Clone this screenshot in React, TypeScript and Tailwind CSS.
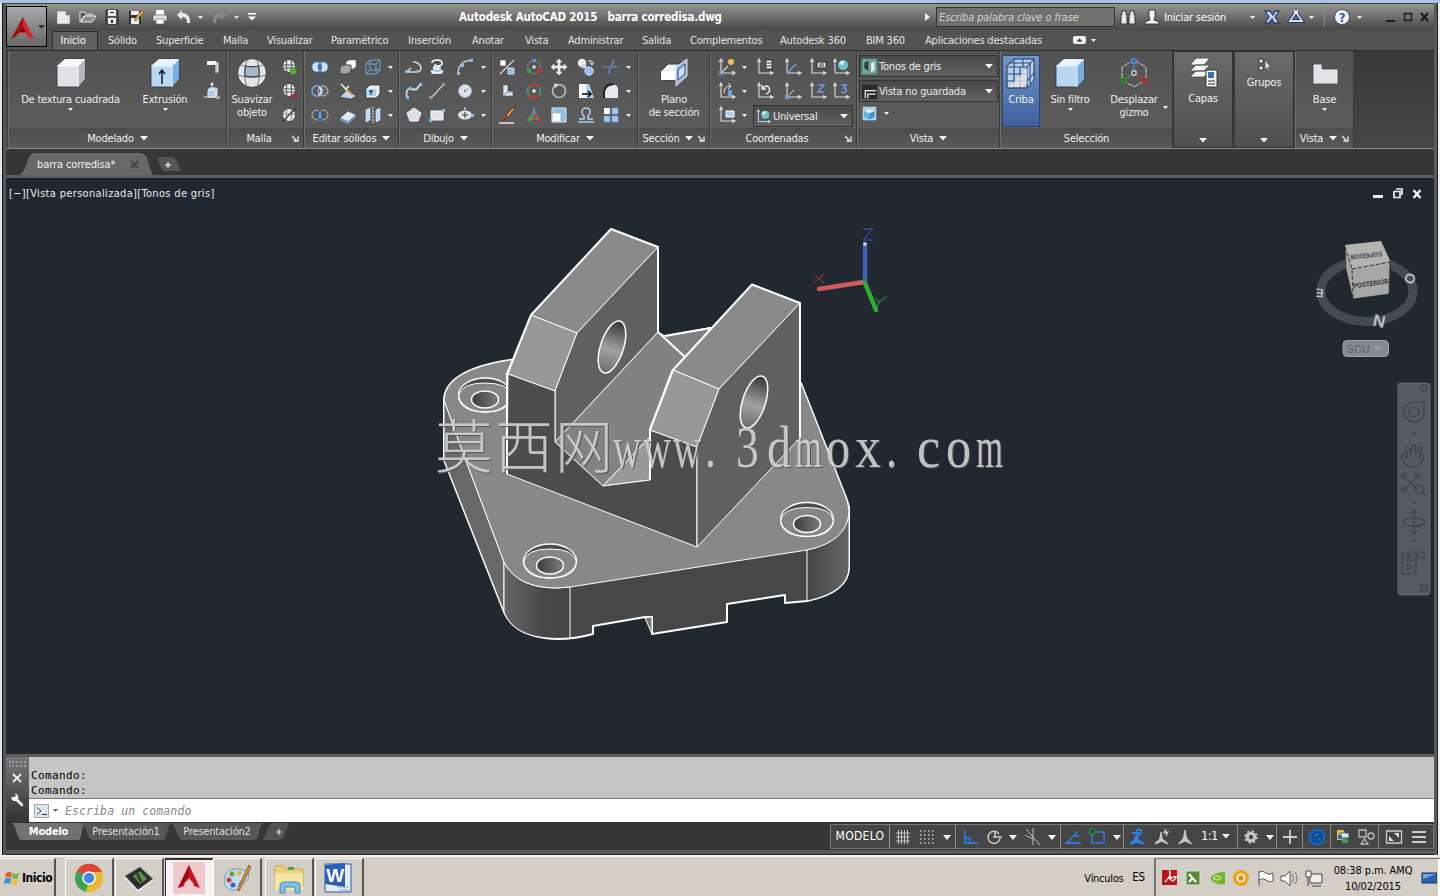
import type { ReactNode } from "react";

const W = "#e8ebf0";
const B = "#8dbbe8";
const D = "#23272e";

// 20x20 ribbon glyphs, keyed by command name
const icons: Record<string, ReactNode> = {
  newFile: <path d="M3 4h9l4 4v9H3zM12 4v4h4" fill={W} stroke="#777" strokeWidth=".6" />,
  open: <><path d="M2 15V5h5l1 2h6v2H6z" fill="#555" stroke={W} /><path d="M3 15l4-6h11l-4 6z" fill="#8a8a8a" stroke={W} /></>,
  save: <><path d="M4 3h12v14H4z" fill="#555" stroke="#2a2a2a" /><path d="M6 3h8v6H6zM6 11h8v6H6z" fill={W} /><path d="M8 5h4v1H8zM9 13h2v3H9z" fill={D} /></>,
  saveAs: <><path d="M3 4h12v13H3z" fill="#333" /><path d="M5 4h8v4H5zM5 11h8v6H5z" fill={W} /><path d="M8 13l8-10 2 2-8 9z" fill="#e8b14a" stroke="#6b4a17" strokeWidth=".7" /></>,
  print: <><path d="M6 3h8v5H6z" fill="#fff" /><path d="M3 8h14v6H3z" fill="#dfe3e8" stroke="#444" strokeWidth=".6" /><path d="M6 12h8v5H6z" fill="#fff" stroke="#555" strokeWidth=".6" /></>,
  undo: <path d="M3 8l5-5v3c5 0 8 3 8 8v2h-3c0-4-1-6-5-6v3z" fill="#e8e8e8" />,
  redo: <path d="M17 8l-5-5v3c-5 0-8 3-8 8v2h3c0-4 1-6 5-6v3z" fill="#8a8a8a" />,
  poly: <><path d="M5 4h9l3 2v9l-4 2V8H5z" fill="#c9ccd2" stroke="#4a4a4a" strokeWidth=".6" /><path d="M5 4h9l-1 4H5z" fill="#f5f6f8" /></>,
  pull: <><path d="M6 9h7v7H6zM6 9l2-2h7v7l-2 2M10 7V2M2 16h16M13 16l4 2" fill="#a9cdf0" stroke={W} /><path d="M8 4l2-3 2 3z" fill={W} /></>,
  meshAdd: <><circle cx="10" cy="9" r="6.500" fill={W} stroke="#444" /><path d="M4 8h12M4 11h12M8 3q-1.500 6 0 12M12 3q1.500 6 0 12" stroke="#555" fill="none" /><circle cx="14" cy="14" r="3.500" fill="#56a83b" /></>,
  meshDel: <><circle cx="10" cy="9" r="6.500" fill={W} stroke="#444" /><path d="M4 8h12M4 11h12M8 3q-1.500 6 0 12M12 3q1.500 6 0 12" stroke="#555" fill="none" /><path d="M12 15h6" stroke="#a52727" strokeWidth="3" /></>,
  meshCrease: <><circle cx="10" cy="10" r="6.500" fill={W} stroke="#444" /><path d="M4 9h12M8 4q-1.500 6 0 12M12 4q1.500 6 0 12" stroke="#888" fill="none" /><path d="M3 17L17 3" stroke="#333" strokeWidth="1.300" /></>,
  union: <><circle cx="7" cy="10" r="5" fill="#cfe2f6" stroke="#5f91cc" /><circle cx="13" cy="10" r="5" fill="#cfe2f6" stroke="#5f91cc" /><ellipse cx="10" cy="10" rx="2" ry="4" fill="#3f75b5" /></>,
  subtract: <><circle cx="13" cy="10" r="5" fill="#666" stroke="#ccc" /><circle cx="7" cy="10" r="5" fill="none" stroke="#6ea0dc" strokeWidth="2" /><path d="M9 6q5 4 0 8" stroke="#fff" strokeWidth="1.500" fill="none" /></>,
  intersect: <><circle cx="7" cy="10" r="5" fill="none" stroke="#bbb" /><circle cx="13" cy="10" r="5" fill="none" stroke="#bbb" /><ellipse cx="10" cy="10" rx="2.500" ry="4.500" fill="#5a99e0" stroke="#234" /></>,
  solidCopy: <><path d="M8 5l3-2h7v7l-3 2H8z" fill="#fff" stroke="#666" strokeWidth=".6" /><path d="M2 10l3-2h8v6l-3 3H2z" fill="#9ea6a6" stroke="#444" /></>,
  slice: <><path d="M2 16l7-7 9 6-5 3z" fill="#bcd9f5" stroke="#335" strokeWidth=".6" /><path d="M8 8l6 6" stroke="#e3a63b" strokeWidth="2" /><path d="M3 3l6 6M7 9l4-4" stroke={W} strokeWidth="1.600" /></>,
  thicken: <><path d="M2 13l8-7 8 4-8 7z" fill={W} stroke="#446" strokeWidth=".6" /><path d="M2 13l8 4 8-7v2l-8 7-8-4z" fill="#6c9fda" /></>,
  edges: <path d="M3 7h10v10H3zM7 3h10v10H7zM3 7l4-4M13 7l4-4M13 17l4-4M3 17l4-4" fill="none" stroke="#6fa5de" />,
  extrudeFace: <><path d="M3 8l4-4h10v9l-4 4H3z" fill={W} stroke="#222" strokeWidth=".7" /><path d="M3 8h10v7H3z" fill="#a9d0ee" /><path d="M8 14V9M6 11l2-2 2 2" stroke="#111" fill="none" /></>,
  separate: <><path d="M3 5l4-2v12l-4 2zM13 5l4-2v12l-4 2z" fill="#b9dafa" stroke={W} strokeWidth=".6" /><path d="M10 2v16" stroke="#fff" strokeDasharray="2 1" /></>,
  polyline: <><path d="M3 15h9q5 0 5-4t-6-6M3 15l4-4" stroke="#d3d8df" strokeWidth="1.600" fill="none" /><path d="M1 13h3v3H1zM9 4h2v2H9zM12 13h2v2h-2z" fill={B} /></>,
  helix: <><path d="M4 17l3-8h6l3 8z" fill="#a2ccef" /><path d="M5 6q0-3 5-3t5 3-4 3q-4 0-3-2M6 10q5 4 7 0M4 14q6 4 12 0" stroke="#fff" strokeWidth="1.600" fill="none" /></>,
  arc: <><path d="M3 17Q3 4 17 3" stroke="#c6cbd3" strokeWidth="1.300" fill="none" /><path d="M2 15h3v3H2zM6 7h3v3H6zM15 2h3v3h-3z" fill={B} /></>,
  spline: <><path d="M3 17Q1 7 7 8t6 0 4-5" stroke="#d6dae0" strokeWidth="1.800" fill="none" /><path d="M2 15h3v3H2zM5 6h3v3H5zM15 2h3v3h-3z" fill={B} /></>,
  line: <><path d="M4 17L17 3" stroke="#cdd1d7" strokeWidth="1.200" /><path d="M2 15h3v3H2zM15 2h3v3h-3z" fill="#8c97b0" /></>,
  circle: <><circle cx="10" cy="10" r="6.500" fill="#dfe2e8" stroke="#aab" /><path d="M10 10l3-3" stroke="#7799cc" /><circle cx="10" cy="10" r="1.200" fill="#6f93cc" /></>,
  polygon: <path d="M10 3l7 5-3 8H6L3 8z" fill="#dde0e6" stroke="#f4f4f4" />,
  rect: <><path d="M4 6h12v9H4z" fill="#dfe2e7" stroke="#fff" /><path d="M15 4h3v3h-3zM2 14h3v3H2z" fill={B} /></>,
  ellipse: <><ellipse cx="10" cy="10" rx="7" ry="4.500" fill="#e0e3e8" /><path d="M10 7v6M7 10h6" stroke="#333" /><path d="M9 2h2v3H9zM16 9h3v3h-3z" fill={B} /></>,
  align: <><path d="M3 3h6v6H3z" fill="#fff" stroke="#444" strokeWidth=".6" /><path d="M11 11h6v6h-6z" fill="#8db9ee" stroke="#cde" /><path d="M3 17L17 3" stroke="#ccc" strokeWidth="1.300" /></>,
  gizmoMove: <><path d="M10 3l6 3.500v7L10 17l-6-3.500v-7z" fill="none" stroke="#999" strokeDasharray="3 1" /><path d="M8 2h4v3H8z" fill="#5c8fe0" /><path d="M3 12h4v4H3z" fill="#3fa03f" /><path d="M13 12h5v4h-5z" fill="#b53232" /><circle cx="10" cy="10" r="1.800" fill="#ddd" /></>,
  move: <path d="M10 2l3 3h-2v4h4V7l3 3-3 3v-2h-4v4h2l-3 3-3-3h2v-4H5v2l-3-3 3-3v2h4V5H7z" fill={W} stroke={W} strokeWidth=".6" />,
  copy: <><circle cx="6" cy="6" r="4.200" fill={W} /><circle cx="13" cy="14" r="4.200" fill="#9cc0ee" stroke="#cde" /><circle cx="8" cy="9" r="2.500" fill="#c9d5e6" /><path d="M12 4h4v4M14 6l2 2 2-2" stroke={W} fill="none" /></>,
  trim: <><path d="M2 10h6M12 10h6" stroke="#6fb0e8" strokeDasharray="3 1" /><path d="M7 17L13 3" stroke="#5b93cf" strokeWidth="1.500" /></>,
  offsetFace: <><path d="M6 4v11h10v-5h-5V4z" fill="#e4e8ee" stroke="#444" strokeWidth=".6" /><path d="M7 14l3-3h6" stroke="#58a" fill="none" /></>,
  gizmoRotate: <><circle cx="10" cy="10" r="6.500" fill="none" stroke="#3aa64d" strokeWidth="1.600" /><path d="M5 6a6.500 6.500 0 0 1 10 0M5 14a6.500 6.500 0 0 0 10 0" fill="none" stroke="#c23636" strokeWidth="2" /><path d="M3 8q2 2 0 4M17 8q-2 2 0 4" fill="none" stroke="#557fd0" strokeWidth="1.500" /><circle cx="10" cy="10" r="1.800" fill="#eee" /></>,
  rotate: <><circle cx="10" cy="10" r="6.500" fill="none" stroke="#b9b9b9" strokeWidth="1.700" /><path d="M5 2l5 2-4 3z" fill="#ddd" /></>,
  mirror: <><path d="M3 3h7v14H3z" fill="#fff" /><path d="M10 3h3l5 14h-8z" fill="#abd2f3" /><path d="M6 13h8M12 10l3 3-3 3" stroke="#000" strokeWidth="1.500" fill="none" /></>,
  fillet: <><path d="M4 17V12q0-8 11-8l2 3v10z" fill="#e6e9ed" /><path d="M3 17V11q1-8 9-8" stroke="#222" strokeWidth="2" fill="none" /></>,
  erase: <><path d="M9 10l7-7 2-1-1 3-6 7z" fill="#e8a13c" stroke="#512" strokeWidth=".7" /><path d="M7 11l3 3-3 2-3 1z" fill="#8d3322" /><path d="M2 18h15" stroke="#eee" strokeWidth="1.400" /></>,
  gizmoScale: <><path d="M10 3v8" stroke="#5c8fe0" strokeWidth="2.200" /><path d="M10 10l-5 5" stroke="#3fa03f" strokeWidth="2" /><path d="M10 10l5 5" stroke="#cc3b3b" strokeWidth="2" /><path d="M10 5l5 9H5z" fill="none" stroke="#888" /><circle cx="5" cy="15" r="2" fill="#3fa03f" /><circle cx="15" cy="15" r="2" fill="#cc3b3b" /></>,
  scale: <><path d="M3 3h14v14H3z" fill="#8ec0ea" stroke="#dfeaf5" /><path d="M3 8h9v9H3z" fill="#fff" stroke="#9bb" /></>,
  stretch: <path d="M2 17h16M3 14h5V11Q6 9 6 7q0-4 4-4t4 4q0 2-2 4v3h5" stroke="#b3cbe4" strokeWidth="1.600" fill="none" />,
  array: <><path d="M3 3h6v6H3z" fill="#fff" /><path d="M11 3h6v6h-6zM3 11h6v6H3zM11 11h6v6h-6z" fill="#a7c9ee" stroke="#6f9fd8" strokeWidth=".7" /></>,
  ucs: <path d="M4 3v13h13M2 5l2-3 2 3M15 14l3 2-3 2M4 16l7-7" stroke="#dadada" strokeWidth="1.200" fill="none" />,
};

const axes = <path d="M4 3v13h13M2.500 5L4 2l1.500 3M15 14.500l3 1.500-3 1.500" stroke="#dedede" strokeWidth="1.100" fill="none" />;
icons.ucsNew = <>{icons.ucs}<circle cx="14" cy="5" r="3" fill="#f2c14b" /><path d="M2 14h4v4H2z" fill="none" stroke="#69c" /></>;
icons.ucsNamed = <>{axes}<path d="M11 3h6v9h-6z" fill="#fff" stroke="#222" /><path d="M12 6h4M12 9h4" stroke="#222" /></>;
icons.ucsObj = <>{axes}<path d="M4 16l9-9" stroke="#6d9bdd" strokeWidth="1.600" /></>;
icons.ucsFace = <>{axes}<path d="M9 5h9v6H9z" fill="#eee" stroke="#222" /><path d="M11 7h5M11 9h5" stroke="#333" /></>;
icons.ucsWorld = <>{axes}<circle cx="12" cy="8" r="5.500" fill="#75c0c4" stroke="#224" strokeWidth=".6" /><path d="M8 7q2-4 5-3l-1 4z" fill="#d8f2ef" /></>;
icons.ucsX = <>{axes}<path d="M7 12q0-7 6-7M11 2l3 3-3 3" stroke={W} fill="none" /><path d="M11 9h4v6h-4z" fill="#69a3e6" /></>;
icons.ucsPrev = <>{axes}<path d="M8 7q4-4 6 0t-3 6M7 4v4h4" stroke={W} strokeWidth="1.500" fill="none" /></>;
icons.ucsOrigin = <>{axes}<path d="M4 16l7-7" stroke="#ddd" /><path d="M2 14h4v4H2z" fill="#69a3e6" /></>;
icons.ucsZ = <>{axes}<path d="M10 4h6l-6 7h6" stroke="#6d9bdd" strokeWidth="1.600" fill="none" /></>;
icons.ucs3 = <>{axes}<path d="M10 4h5l-2 3q3 0 2 3t-5 1" stroke="#6d9bdd" strokeWidth="1.600" fill="none" /></>;
icons.ucsView = <>{axes}<path d="M9 6h8v6H9z" fill="#a9cdf2" stroke="#fff" /></>;
icons.cubeBlue = <><path d="M2 2h16v16H2z" fill="#a9d6ee" /><path d="M4 7l6-3 6 3v7l-6 3-6-3z" fill="#3e94c7" /><path d="M4 7l6 3v7l-6-3z" fill="#65b9e2" /><path d="M4 7l6-3 6 3-6 3z" fill="#dff2fa" /></>;
icons.gray = <><path d="M1 1h18v18H1z" fill="#63a79d" /><path d="M4 6l5-3v12l-5-3z" fill="#2c3a3b" /><path d="M9 3l3 2v12l-3-2z" fill="#8c9a9a" /><path d="M12 6l4-2v10l-4 3z" fill="#e9efef" /></>;
icons.viewSaved = <><path d="M1 2h18v17H1z" fill="#2b2b2b" /><path d="M5 18v-9h13M8 18v-5h9" stroke="#eee" fill="none" strokeWidth="1.500" /></>;

function Ico({ n, s = 20 }: { n: string; s?: number }) {
  return (
    <svg width={s} height={s} viewBox="0 0 20 20" className="shrink-0">
      {icons[n]}
    </svg>
  );
}

function Down({ big = false, color = "#f2f2f2" }: { big?: boolean; color?: string }) {
  return big ? (
    <svg width="8" height="5" viewBox="0 0 8 5" className="shrink-0"><path d="M0 0h8L4 4.500z" fill={color} /></svg>
  ) : (
    <svg width="5" height="3" viewBox="0 0 5 3" className="shrink-0"><path d="M0 0h5L2.500 3z" fill={color} /></svg>
  );
}

function Launcher() {
  return (
    <svg width="7" height="7" viewBox="0 0 7 7" className="shrink-0">
      <path d="M0 1l4 4M6 1.500V6H1.500" stroke="#f0f0f0" strokeWidth="1.300" fill="none" />
    </svg>
  );
}

function Panel({ title, w, children, arrow, launcher }: { title: string; w: string; children: ReactNode; arrow?: boolean; launcher?: boolean }) {
  return (
    <div className={`${w} flex h-full shrink-0 flex-col border-r border-r-[#3a3a3a] border-l border-l-[#6e6e6e]`}>
      <div className="h-[77px] bg-gradient-to-b from-[#535353] to-[#5b5b5b] pt-1">{children}</div>
      <div className="flex h-[20px] items-center justify-center gap-[6px] bg-gradient-to-b from-[#4c4c4c] to-[#5a5a5a] pt-px">
        <span className={arrow || !launcher ? "" : "flex-1 text-center"}>{title}</span>
        {arrow && <Down big />}
        {launcher && <div className={arrow ? "-ml-px" : "mr-[4px] -ml-[4px]"}><Launcher /></div>}
      </div>
    </div>
  );
}

function Cube({ blue = false, arrow = false }: { blue?: boolean; arrow?: boolean }) {
  return (
    <svg width="34" height="34" viewBox="0 0 34 34">
      <path d="M3 10L11 3h20v20l-7 8H3z" fill={blue ? "#b8d8f3" : "#e0e1e5"} stroke="#2b2f36" strokeWidth=".8" />
      <path d="M24 10l7-7v20l-7 8z" fill={blue ? "#7aaee0" : "#b4b6bb"} />
      <path d="M3 10L11 3h20l-7 7z" fill={blue ? "#e6f2fc" : "#f8f8f9"} />
      <path d="M3 10h21v21M24 10l7-7" stroke={blue ? "#e8f4ff" : "#fff"} fill="none" />
      {arrow && <path d="M14 28V15M11 18l3-4 3 4" stroke="#1c2733" strokeWidth="1.600" fill="none" />}
    </svg>
  );
}

const menuTabs = [
  { name: "Sólido", w: "w-[48px]" },
  { name: "Superficie", w: "w-[67px]" },
  { name: "Malla", w: "w-[44px]" },
  { name: "Visualizar", w: "w-[64px]" },
  { name: "Paramétrico", w: "w-[77px]" },
  { name: "Inserción", w: "w-[64px]" },
  { name: "Anotar", w: "w-[53px]" },
  { name: "Vista", w: "w-[43px]" },
  { name: "Administrar", w: "w-[74px]" },
  { name: "Salida", w: "w-[48px]" },
  { name: "Complementos", w: "w-[90px]" },
  { name: "Autodesk 360", w: "w-[86px]" },
  { name: "BIM 360", w: "w-[59px]" },
  { name: "Aplicaciones destacadas", w: "w-[148px]" },
];

function TitleBar() {
  return (
    <div className="flex h-[26px] items-center bg-gradient-to-b from-[#969691] via-[#6e6e6c] to-[#474747] pl-[48px] text-white">
      <div className="flex items-center gap-[4px]">
        {["newFile", "open", "save", "saveAs", "print", "undo"].map((n) => <Ico key={n} n={n} />)}
      </div>
      <div className="flex items-center pl-[4px]">
        <Down />
        <div className="w-[6px]" />
        <Ico n="redo" />
        <div className="w-[5px]" />
        <Down color="#ddd" />
        <svg width="10" height="8" viewBox="0 0 10 8" className="ml-[8px]"><path d="M1 0h8v1.500H1zM1 3.500h8L5 7.500z" fill="#fff" /></svg>
      </div>
      <div className="ml-[202px] w-[264px] text-[11.500px] font-bold whitespace-pre tracking-[-0.2px]">Autodesk AutoCAD 2015   barra corredisa.dwg</div>
      <svg width="6" height="8" viewBox="0 0 6 8" className="ml-[202px]"><path d="M0 0l5 4-5 4z" fill="#eee" /></svg>
      <div className="ml-[5px] flex h-[20px] w-[179px] items-center border border-[#333] bg-[#70706d] pl-[2px] text-[11px] tracking-[-0.12px] text-[#d2d2cf] italic">Escriba palabra clave o frase</div>
      <svg width="16" height="18" viewBox="0 0 16 18" className="ml-[5px]"><path d="M2 3h4v3l1 2v8H1V8l1-2zM10 3h4v3l1 2v8H9V8l1-2zM7 7h2v4H7z" fill="#e9e9e9" stroke="#222" strokeWidth=".8" /></svg>
      <svg width="16" height="18" viewBox="0 0 16 18" className="ml-[8px]"><path d="M5 2h6v7l-1 2v1l5 2v2H1v-2l5-2v-1L5 9z" fill="#f3f3f3" stroke="#222" strokeWidth=".8" /></svg>
      <span className="ml-[4px] w-[86px]">Iniciar sesión</span>
      <Down />
      <svg width="18" height="16" viewBox="0 0 18 16" className="ml-[8px]"><path d="M2 2h5l3 4 2-4h4l-4 6 4 6h-5l-2-4-3 4H2l4-6z" fill="#c7d4ef" stroke="#2b3d78" strokeWidth="1.300" /></svg>
      <svg width="18" height="18" viewBox="0 0 18 18" className="ml-[6px]"><path d="M9 4l6 9H3z" fill="none" stroke="#253a70" strokeWidth="4" /><path d="M9 4l6 9H3z" fill="none" stroke="#d7e0ef" strokeWidth="1.800" /><circle cx="9" cy="4" r="2" fill="#fff" /></svg>
      <div className="ml-[4px]"><Down /></div>
      <div className="ml-[10px] h-[20px] w-px bg-[#888]" />
      <svg width="18" height="18" viewBox="0 0 18 18" className="ml-[8px]"><circle cx="9" cy="9" r="7.500" fill="#f2f4f8" stroke="#3b4a66" /><text x="9" y="13.500" textAnchor="middle" fontSize="13" fontWeight="bold" fill="#2a5aa8">?</text></svg>
      <div className="ml-[6px]"><Down /></div>
      <svg width="46" height="14" viewBox="0 0 46 14" className="ml-[23px]"><path d="M1 11h9" stroke="#1d1d1d" strokeWidth="2" /><path d="M19.500 3.500h7v7h-7z" fill="none" stroke="#1d1d1d" strokeWidth="1.500" /><path d="M36 3l7 8M43 3l-7 8" stroke="#1d1d1d" strokeWidth="2.200" /></svg>
    </div>
  );
}

function RibbonTabs() {
  return (
    <div className="flex h-[21px] items-center border-b border-[#2c2c2c] bg-[#535353] text-[#e4e4e4]">
      <div className="ml-[46px] flex h-[19px] w-[46px] items-center justify-center self-end border-x border-t border-x-[#2e2e2e] border-t-[#2a2a2a] bg-[#606060] pr-[4px] pb-px text-white">Inicio</div>
      <div className="flex pl-[10px]">
        {menuTabs.map((t) => <span key={t.name} className={`${t.w} whitespace-nowrap`}>{t.name}</span>)}
      </div>
      <svg width="13" height="8" viewBox="0 0 13 8"><rect width="13" height="8" rx="2" fill="#eee" /><path d="M3.500 5.500h6l-3-3z" fill="#333" /></svg>
      <div className="ml-[5px]"><Down /></div>
    </div>
  );
}

function IconGrid({ cols, names }: { cols: string; names: string[] }) {
  return (
    <div className={`${cols} grid auto-rows-[24px] items-center justify-items-center`}>
      {names.map((n, i) => (n === "v" ? <Down key={i} /> : <Ico key={i} n={n} />))}
    </div>
  );
}

function Combo({ icon, text, w }: { icon: string; text: string; w: string }) {
  return (
    <div className={`${w} flex h-[22px] items-center border border-[#333] bg-gradient-to-b from-[#4a4a4a] to-[#606060] pr-[4px] pl-px text-[#eee]`}>
      <Ico n={icon} s={17} />
      <span className="flex-1 pl-px whitespace-nowrap">{text}</span>
      <Down big />
    </div>
  );
}

function Ribbon() {
  return (
    <div className="flex h-[98px] border-b border-[#8a8a8a] bg-gradient-to-b from-[#383838] to-[#474747] pl-[2px] text-[#f1f1f1]">
      <Panel title="Modelado" w="w-[219px]" arrow>
        <div className="flex">
          <div className="flex w-[123px] flex-col items-center pt-[1px]">
            <Cube /><span className="pt-[3px] leading-[14px] whitespace-nowrap">De textura cuadrada</span><div className="pt-[1px]"><Down /></div>
          </div>
          <div className="flex w-[66px] flex-col items-center pt-[1px]">
            <Cube blue arrow /><span className="pt-[3px] leading-[14px]">Extrusión</span><div className="pt-[1px]"><Down /></div>
          </div>
          <IconGrid cols="grid-cols-[28px]" names={["poly", "pull"]} />
        </div>
      </Panel>
      <Panel title="Malla" w="w-[77px]" launcher>
        <div className="flex">
          <div className="flex w-[48px] flex-col items-center pt-[1px] text-center">
            <svg width="34" height="34" viewBox="0 0 34 34"><circle cx="17" cy="17" r="14.500" fill="#e3e5e9" stroke="#333" /><path d="M5 9q12 4 24 0M3 19q14 5 28 0M12 4q-5 13 0 27M22 4q5 13 0 27" stroke="#777" fill="none" /><path d="M11 10q6 2 12 0 2 5 1 10-7 2-14 0-1-5 1-10" fill="#a9b5c5" stroke="#333" /></svg>
            <span className="pt-[3px] leading-[13px]">Suavizar objeto</span>
          </div>
          <IconGrid cols="grid-cols-[26px]" names={["meshAdd", "meshDel", "meshCrease"]} />
        </div>
      </Panel>
      <Panel title="Editar sólidos" w="w-[95px]" arrow>
        <IconGrid cols="grid-cols-[29px_27px_24px_11px]" names={["union", "solidCopy", "edges", "v", "subtract", "slice", "extrudeFace", "v", "intersect", "thicken", "separate", "v"]} />
      </Panel>
      <Panel title="Dibujo" w="w-[93px]" arrow>
        <IconGrid cols="grid-cols-[27px_20px_36px_1px]" names={["polyline", "helix", "arc", "v", "spline", "line", "circle", "v", "polygon", "rect", "ellipse", "v"]} />
      </Panel>
      <Panel title="Modificar" w="w-[146px]" arrow>
        <IconGrid cols="grid-cols-[28px_26px_24px_30px_20px_14px]" names={["align", "gizmoMove", "move", "copy", "trim", "v", "offsetFace", "gizmoRotate", "rotate", "mirror", "fillet", "v", "erase", "gizmoScale", "scale", "stretch", "array", "v"]} />
      </Panel>
      <Panel title="Sección" w="w-[72px]" arrow launcher>
        <div className="flex flex-col items-center pt-[1px] text-center">
          <svg width="34" height="34" viewBox="0 0 34 34"><path d="M4 15l7-7h13v16H4z" fill="#eef0f3" stroke="#333" /><path d="M4 15h14v9H4z" fill="#fff" /><path d="M19 11l11-8v17l-11 10z" fill="#9fb9dc" stroke="#ddd" /><path d="M21 14l7-6v10l-7 6z" fill="#c9dcf6" stroke="#2a4a7d" /></svg>
          <span className="pt-[3px] leading-[13px] whitespace-pre">{"Plano\nde sección"}</span>
        </div>
      </Panel>
      <Panel title="Coordenadas" w="w-[147px]" launcher>
        <div className="flex">
          <IconGrid cols="grid-cols-[31px_4px]" names={["ucsNew", "v", "ucsX", "v", "ucsView", "v"]} />
          <div className="pl-[3px]">
            <IconGrid cols="grid-cols-[31px_26px_23px_24px]" names={["ucsNamed", "ucsObj", "ucsFace", "ucsWorld", "ucsPrev", "ucsOrigin", "ucsZ", "ucs3"]} />
            <div className="pt-[2px] pl-[4px]"><Combo icon="ucsWorld" text="Universal" w="w-[100px]" /></div>
          </div>
        </div>
      </Panel>
      <Panel title="Vista" w="w-[143px]" arrow>
        <div className="flex flex-col gap-[3px] pl-[1px]">
          <Combo icon="gray" text="Tonos de gris" w="w-[139px]" />
          <Combo icon="viewSaved" text="Vista no guardada" w="w-[139px]" />
          <div className="flex items-center gap-[6px] pl-[2px]"><Ico n="cubeBlue" s={17} /><Down /></div>
        </div>
      </Panel>
      <Panel title="Selección" w="w-[173px]">
        <div className="flex">
          <div className="ml-[1px] flex h-[72px] w-[38px] flex-col items-center border border-[#2a4475] bg-gradient-to-b from-[#7198ca] to-[#3e5f9d] pt-[1px]">
            <svg width="32" height="34" viewBox="0 0 32 34"><path d="M2 9l7-7h20v21l-7 8H2z" fill="#b9cfea" stroke="#234" /><path d="M2 10h20M2 17h20M2 24h20M9 10v21M15 10v21M22 10v21M22 10l7-8M22 24l7-8M5 6h20M25 6v21M9 2v8M18 2v8" stroke="#23477f" strokeWidth="1.100" /><path d="M4 30L22 11v15l-4 4z" fill="#ece8e2" opacity=".75" /></svg>
            <span className="pt-[2px] leading-[14px]">Criba</span>
          </div>
          <div className="flex w-[60px] flex-col items-center pt-[1px]">
            <Cube blue /><span className="pt-[3px] leading-[14px] whitespace-nowrap">Sin filtro</span><div className="pt-[1px]"><Down /></div>
          </div>
          <div className="flex w-[68px] flex-col items-center pt-[1px] text-center">
            <svg width="34" height="34" viewBox="0 0 34 34"><path d="M17 4l12 7v13l-12 7-12-7V11z" fill="none" stroke="#ccc" strokeDasharray="6 1" /><path d="M17 16V5" stroke="#4d86df" strokeWidth="1.500" /><path d="M17 17L6 24" stroke="#35a33a" strokeWidth="1.500" strokeDasharray="3 1" /><path d="M17 17l12 7" stroke="#d13a3a" strokeWidth="1.500" strokeDasharray="3 1" /><path d="M15 15h4v4h-4z" fill="#444" stroke="#fff" /><path d="M15 3h4v4h-4z" fill="#555" stroke="#4d86df" strokeWidth="1.500" /><path d="M4 23h4v4H4z" fill="#555" stroke="#1d8a22" strokeWidth="1.500" /><path d="M26 23h4v4h-4z" fill="#555" stroke="#b52222" strokeWidth="1.500" /></svg>
            <span className="pt-[3px] leading-[13px]">Desplazar gizmo</span>
          </div>
          <div className="-ml-[5px] pt-[51px]"><Down /></div>
        </div>
      </Panel>
      <div className="flex h-full w-[60px] flex-col items-center border border-[#333] bg-gradient-to-b from-[#6a6a6a] to-[#4f4f4f] pt-[2px]">
        <svg width="34" height="38" viewBox="0 0 34 38"><path d="M4 11L10 4h14l-6 7zM4 17l6-6h14l-6 6zM4 23l6-6h14l-6 6z" fill="#f3f3f3" stroke="#444" strokeWidth=".8" /><path d="M20 16h11v17H20z" fill="#f4f6fa" stroke="#333" /><path d="M22 18h6v6h-6z" fill="#3b72b8" /><path d="M22 27h7M22 30h7" stroke="#222" /></svg>
        <span className="leading-[13px]">Capas</span>
        <div className="mt-[33px]"><Down big /></div>
      </div>
      <div className="ml-px flex h-full w-[60px] flex-col items-center border border-[#333] bg-gradient-to-b from-[#6a6a6a] to-[#4f4f4f] pt-[5px]">
        <svg width="16" height="16" viewBox="0 0 16 16"><path d="M3 2h4v4H3zM3 9h4v4H3z" fill="#eee" stroke="#333" /><path d="M9 3v10l2-2 2 4 1-1-2-4h3z" fill="#ddd" stroke="#333" strokeWidth=".6" /></svg>
        <span className="pt-[3px] leading-[13px]">Grupos</span>
        <div className="mt-[49px]"><Down big /></div>
      </div>
      <div className="w-px" />
      <Panel title="Vista" w="w-[59px]" arrow launcher>
        <div className="flex flex-col items-center pt-[1px]">
          <svg width="34" height="34" viewBox="0 0 34 34"><path d="M5 8h9v5h16v15H5z" fill="#e3e4e7" stroke="#444" strokeWidth=".8" /></svg>
          <span className="pt-[3px] leading-[14px]">Base</span><div className="pt-[1px]"><Down /></div>
        </div>
      </Panel>
    </div>
  );
}

function FileTabs() {
  return (
    <div className="flex h-[26px] items-end bg-[#363636] text-[#f0f0f0]">
      <div className="relative ml-[13px] flex h-[22px] w-[134px] items-center">
        <svg width="134" height="22" viewBox="0 0 134 22" className="absolute inset-0"><path d="M0 22q5-2 8-12Q10 0 16 0h105q6 0 8 8 2 9 5 14z" fill="#686868" /></svg>
        <span className="relative w-[98px] pt-px pl-[18px] tracking-[-0.1px] whitespace-nowrap">barra corredisa*</span>
        <svg width="9" height="9" viewBox="0 0 9 9" className="relative ml-[13px]"><path d="M1 1l7 7M8 1l-7 7" stroke="#444" strokeWidth="2" /></svg>
      </div>
      <svg width="24" height="17" viewBox="0 0 24 17" className="mb-[1px] ml-[4px]"><path d="M1 3q0-3 4-3h11q4 2 7 14H8q-4 0-7-11z" fill="#555" /><path d="M11 5v6M8 8h6" stroke="#ddd" strokeWidth="1.500" /></svg>
    </div>
  );
}

function Bore({ x, y }: { x: number; y: number }) {
  return (
    <g transform={`translate(${x} ${y})`}>
      <ellipse rx="26.500" ry="17" fill="#4c4c4c" />
      <path d="M-26.500 1Q-24-12 0-12T26.500 1Q25 17 0 17T-26.500 1z" fill="#868686" stroke="#fff" strokeWidth="1" />
      <ellipse rx="26.500" ry="17" fill="none" stroke="#fff" strokeWidth="1.300" />
      <ellipse cy="4.500" rx="13.500" ry="8.500" fill="url(#bore)" stroke="#fff" strokeWidth="1.500" />
    </g>
  );
}

const glyphs = [
  ["w", 613, 28], ["w", 643, 28], ["w", 673, 28], [".", 705, 11], ["3", 736, 23], ["d", 767, 24],
  ["m", 795, 27], ["o", 826, 24], ["x", 855, 26], [".", 886, 11], ["c", 917, 23], ["o", 946, 25], ["m", 976, 27],
] as const;

function Model() {
  return (
    <svg width="600" height="430" viewBox="425 220 600 430" className="absolute top-[41px] left-[419px]">
      <defs>
        <linearGradient id="hole" x1="0" y1="0" x2="0" y2="1"><stop offset="0" stopColor="#333" /><stop offset=".55" stopColor="#a2a2a2" /><stop offset="1" stopColor="#6a6a6a" /></linearGradient>
        <linearGradient id="bore"><stop offset="0" stopColor="#3b3b3b" /><stop offset="1" stopColor="#7c7c7c" /></linearGradient>
        <linearGradient id="cornerL"><stop offset="0" stopColor="#666" /><stop offset=".6" stopColor="#484848" /><stop offset="1" stopColor="#444" /></linearGradient>
        <linearGradient id="cornerR"><stop offset="0" stopColor="#444" /><stop offset="1" stopColor="#666" /></linearGradient>
      </defs>
      <g strokeLinejoin="round" stroke="#fff">
        <path d="M510 360Q445 370 444 400V460L504 612Q515 637 557 639 575 639 593 634V626L645 617h7V634L727 622V604L785 595V603L807 601Q849 592 849 567V507L847 500 801 383 711 328 665 336z" fill="#474747" strokeWidth="2" />
        <path d="M444 400V460L504 612V562L463 453z" fill="#686868" strokeWidth="1" />
        <path d="M504 562Q517 588 557 588L570 587V638Q515 642 504 612z" fill="url(#cornerL)" strokeWidth="1" />
        <path d="M807 550Q849 541 849 507V567Q849 592 807 601z" fill="url(#cornerR)" strokeWidth="1" />
        <path d="M510 360Q445 370 444 400L463 453 504 562Q517 588 557 588L570 587 807 550Q849 541 849 510L847 500 801 383 711 328 665 336z" fill="#888" strokeWidth="1" />
        <path d="M645 618l7 16v-17z" fill="#777" strokeWidth="1" />
      </g>
      <Bore x={485} y={395} />
      <Bore x={550} y={561} />
      <Bore x={807} y={519.5} />
      <g strokeLinejoin="round" stroke="#fff" strokeWidth="1">
        <path d="M658 332L685 357 711 328 665 336z" fill="#7f7f7f" />
        <path d="M555 442L658 332 685 357 672 370 650 428V437L603 486z" fill="#828282" />
        <path d="M603 486L650 437V480z" fill="#999" />
        <path d="M611 229L658 247 577 333 531 315z" fill="#8a8a8a" />
        <path d="M531 315L577 333 555 391 508 374z" fill="#989898" />
        <path d="M577 333L658 247V332L555 442V391z" fill="#606060" />
        <path d="M508 374L555 391V442L603 486 650 480V430L697 447V547L507 474z" fill="#4c4c4c" />
        <path d="M752 284.500L800 303 719 389 673 370z" fill="#8a8a8a" />
        <path d="M673 370L719 389 697 447 650 430z" fill="#989898" />
        <path d="M719 389L800 303V438L697 547V447z" fill="#606060" />
        <ellipse cx="612" cy="347" rx="11.500" ry="27" transform="rotate(18 612 347)" fill="url(#hole)" strokeWidth="1.500" />
        <ellipse cx="754" cy="402" rx="11.500" ry="27" transform="rotate(18 754 402)" fill="url(#hole)" strokeWidth="1.500" />
        <path d="M507 474V374L531 315 611 229 658 247V332L685 357M650 480V430L673 370 752 284.500 800 303V438M665 336L711 328" fill="none" strokeWidth="2" />
      </g>
      <g strokeLinecap="round">
        <path d="M864 282L819 289" stroke="#cf5a60" strokeWidth="4.500" />
        <path d="M865 281V246" stroke="#3a62b5" strokeWidth="4.500" />
        <path d="M865 283L876 310" stroke="#2eac35" strokeWidth="4.500" />
        <circle cx="865" cy="244" r="2" fill="#bcd0ee" />
        <path d="M814 274l10 9M824 274l-10 9" stroke="#b53a40" />
        <path d="M863 229h10l-10 11h11" stroke="#3a5fc4" fill="none" />
        <path d="M875 298l4 4 7-5M879 302l-2 7" stroke="#2d9c35" fill="none" />
      </g>
      <g opacity=".9" fill="#d2d2d2" className="[filter:drop-shadow(1.5px_1.5px_0_#505050)]">
        <text x="435" y="468" fontSize="58" fontWeight="300" letterSpacing="2" fontFamily="'Noto Sans CJK SC', sans-serif">莫西网</text>
        <text y="467" fontSize="60" letterSpacing="0" fontFamily="'Liberation Serif', serif">
          {glyphs.map(([c, x, w]) => <tspan key={x} x={x} textLength={w} lengthAdjust="spacingAndGlyphs">{c}</tspan>)}
        </text>
      </g>
    </svg>
  );
}

function Canvas() {
  return (
    <div className="relative h-[575px] bg-[#212830] text-white">
      <div className="absolute top-[7px] left-[3px] text-[11px] tracking-[0.33px] text-[#ececec]">[−][Vista personalizada][Tonos de gris]</div>
      <Model />
      <svg width="52" height="14" viewBox="0 0 52 14" className="absolute top-[8px] right-[9px]">
        <path d="M0 9.500h10" stroke="#eee" strokeWidth="3" />
        <path d="M21 4.500h6v6h-6zM23 2h6v6" fill="none" stroke="#eee" strokeWidth="1.700" />
        <path d="M40.500 3l7 8M47.500 3l-7 8" stroke="#eee" strokeWidth="2.400" />
      </svg>
      <svg width="108" height="130" viewBox="1313 234 108 130" className="absolute top-[55px] left-[1307px]">
        <ellipse cx="1367" cy="291" rx="46" ry="30.500" fill="none" stroke="#434a53" strokeWidth="9" />
        <path d="M1345 245l36-4 9 19-1 34-36 5-7-30z" fill="#a6a8a6" stroke="#222" strokeWidth=".6" />
        <path d="M1345 245l36-4 9 20-38 8z" fill="#b2b4b2" />
        <path d="M1345 247l7 22 1 28M1352 269l38-7" stroke="#333" strokeDasharray="4 2" fill="none" />
        <text x="1371" y="286" transform="rotate(-8 1371 286)" textAnchor="middle" fontSize="6.800" letterSpacing="-.4" fontWeight="bold" fill="#44474a">POSTERIOR</text>
        <text x="1366" y="253" transform="rotate(174 1366 253)" textAnchor="middle" fontSize="6.800" letterSpacing="-.3" fontWeight="bold" fill="#55585a">SUPERIOR</text>
        <g fontWeight="bold" fill="#b9bdc1" fontFamily="'Liberation Sans', sans-serif">
          <text x="1320" y="289" textAnchor="middle" fontSize="12" transform="rotate(185 1320 289)">E</text>
          <text x="1373" y="327" fontSize="17" transform="rotate(12 1380 321)">N</text>
          <text x="1404" y="283" fontSize="14" transform="rotate(-75 1410 278)">O</text>
        </g>
        <rect x="1343" y="340.500" width="45.500" height="16" rx="4" fill="#858b94" stroke="#9ca2aa" />
        <text x="1347" y="352.500" fontSize="10.500" letterSpacing=".2" fill="#5b626b" fontFamily="'Liberation Sans', sans-serif">SCU</text>
        <path d="M1373 346h9l-4.500 5z" fill="#979da5" />
      </svg>
      <svg width="34" height="214" viewBox="0 0 34 214" className="absolute top-[203px] left-[1391px]">
        <rect x="1" y="1" width="32" height="212" rx="3" fill="#545b62" stroke="#626b73" />
        <g fill="none" stroke="#3c4249" strokeWidth="1.200">
          <circle cx="27" cy="6" r="3" />
          <path d="M27 20v11a10 10 0 1 1-10-11zM17 25a5 5 0 1 0 5 6q0-5-5-5" />
          <path d="M8 82q-6-10-2-9l5 4-3-11q2-2 4 1l2 6 1-10q2-2 3 1v9l4-8q3 0 2 3l-2 8 3-3q3 1 1 4-4 8-9 8-5 1-9-3" />
          <path d="M7 94l14 14M21 94L7 108M5 92h4v4H5zM19 92h4v4h-4zM5 106h4v4H5z" />
          <circle cx="22" cy="107" r="4" />
          <path d="M25 110l4 4M17 129v22M14 132l3-4 3 4M14 148l3 4 3-4" />
          <ellipse cx="17" cy="140" rx="11" ry="4" />
          <path d="M5 170h6v6H5zM13 170h6v6h-6zM21 170h6v6h-6zM5 178h14v14H5zM10 182v6l5-3z" />
          <path d="M24 203h6v6h-6z" />
        </g>
        <path d="M15 51h4l-2 2zM15 120h4l-2 2zM15 158h4l-2 2z" fill="#30363d" />
      </svg>
    </div>
  );
}

function CommandLine() {
  return (
    <div className="flex h-[65px] bg-[#c6c6c6]">
      <div className="flex w-[23px] flex-col items-center bg-gradient-to-b from-[#777] via-[#555] to-[#333]">
        <div className="mt-[4px] h-[6px] w-[17px] border-y-2 border-dotted border-[#999]" />
        <svg width="10" height="10" viewBox="0 0 10 10" className="mt-[6px] -ml-[2px]"><path d="M1 1l8 8M9 1L1 9" stroke="#f2f2f2" strokeWidth="1.800" /></svg>
        <svg width="14" height="14" viewBox="0 0 14 14" className="mt-[10px] -ml-[2px]"><path d="M5 5l7 7" stroke="#f2f2f2" strokeWidth="2.600" strokeLinecap="round" /><path d="M5 .5a4 4 0 0 1-4 4 4 4 0 0 0 6 3 4 4 0 0 0-2-7l1 3-2 2" fill="#f2f2f2" /></svg>
      </div>
      <div className="flex flex-1 flex-col font-['DejaVu_Sans_Mono',monospace] text-black">
        <div className="h-[42px] border-b border-[#777] pt-[11px] pl-[2px] text-[11px] leading-[15px] tracking-[0.38px]">
          <div>Comando:</div>
          <div>Comando:</div>
        </div>
        <div className="flex flex-1 items-center bg-white pl-[5px]">
          <svg width="15" height="14" viewBox="0 0 15 14"><path d="M.5.5h14v13H.5z" fill="#dce6ee" stroke="#9aa" /><path d="M3 3.500l4 3.500-4 3.500M8 10.500h5" stroke="#335" fill="none" /></svg>
          <div className="mr-[7px] ml-[4px]"><Down color="#666" /></div>
          <span className="pt-px text-[11.500px] text-[#888] italic tracking-[0.1px]">Escriba un comando</span>
        </div>
      </div>
    </div>
  );
}

function LayoutTab({ text, w, active = false }: { text: string; w: string; active?: boolean }) {
  return (
    <div className={`${w} relative flex h-[18px] justify-center pt-px`}>
      <svg width="100%" height="18" viewBox="0 0 100 18" preserveAspectRatio="none" className="absolute inset-0"><path d="M0 0h100Q97 2 95 11q-1 6-5 6H14q-5 0-7-6Q4 2 0 0z" fill={active ? "#717171" : "#575757"} /></svg>
      <span className={active ? "relative font-bold text-white" : "relative text-[#dedede]"}>{text}</span>
    </div>
  );
}

// status bar cells; the width class holds the slot of each drawing
const statusIcons: { w: string; d: ReactNode; sep?: boolean }[] = [
  { w: "w-[25px]", d: <path d="M5.500 3v14M8.500 3v14M11.500 3v14M14.500 3v14M3 6h14M3 10h14M3 14h14" stroke="#c4c4c4" fill="none" /> },
  { w: "w-[23px]", d: <path d="M3 4h14M3 8h14M3 12h14M3 16h14" stroke="#c4c4c4" strokeWidth="1.500" strokeDasharray="1.500 2.500" /> },
  { w: "w-[18px]", d: <path d="M6 8h8l-4 5z" fill="#fff" />, sep: true },
  { w: "w-[27px]", d: <path d="M5 3v13h13M5 11h5v5" stroke="#2f78d8" strokeWidth="1.800" fill="none" /> },
  { w: "w-[22px]", d: <path d="M15 7a6 6 0 1 0 1 4M9 10h9M11 10V5" stroke="#c8c8c8" strokeWidth="1.500" fill="none" /> },
  { w: "w-[16px]", d: <path d="M6 8h8l-4 5z" fill="#fff" /> },
  { w: "w-[23px]", d: <path d="M3 2l14 16M10 1v17M2 8l8 4" stroke="#c2c2c2" fill="none" /> },
  { w: "w-[17px]", d: <path d="M6 8h8l-4 5z" fill="#fff" />, sep: true },
  { w: "w-[24px]", d: <path d="M2 16h16M4 16L15 4M12 9h4" stroke="#2f78d8" strokeWidth="1.800" fill="none" /> },
  { w: "w-[26px]", d: <><path d="M4 5h12v11H4z" fill="none" stroke="#2f78d8" strokeWidth="1.600" /><path d="M2 2h5v5H2z" fill="#154d22" stroke="#2d9b49" /></> },
  { w: "w-[13px]", d: <path d="M6 8h8l-4 5z" fill="#fff" />, sep: true },
  { w: "w-[26px]", d: <><path d="M10 8l1 5 6 4-7-2-7 2 5-4 1-5M5 6h7" stroke="#2f83e8" strokeWidth="1.800" fill="#2f83e8" /><circle cx="12" cy="5" r="2.500" fill="none" stroke="#2f83e8" strokeWidth="1.800" /></> },
  { w: "w-[24px]", d: <path d="M9 5l1 7 6 5-6-3-7 3 5-5zM14 2l-2 4 4-1-2 4" stroke="#c8c8c8" strokeWidth="1.300" fill="#c8c8c8" /> },
  { w: "w-[22px]", d: <path d="M10 3l1.500 8 5 6-6.500-3-6.500 3 5-6z" stroke="#c8c8c8" fill="#c8c8c8" /> },
];

function StatusIcon({ w, d, sep }: { w: string; d: ReactNode; sep?: boolean }) {
  return (
    <div className={`${w} flex h-[24px] items-center justify-center ${sep ? "border-r border-[#888]" : ""}`}>
      <svg width="20" height="20" viewBox="0 0 20 20" className="shrink-0">{d}</svg>
    </div>
  );
}

function StatusBar() {
  return (
    <div className="flex h-[28px] justify-between bg-[#363636]">
      <div className="flex pt-px pl-[6px]">
        <LayoutTab text="Modelo" w="w-[73px]" active />
        <div className="-ml-[4px] flex">
          <LayoutTab text="Presentación1" w="w-[90px]" />
          <LayoutTab text="Presentación2" w="w-[92px]" />
        </div>
        <svg width="26" height="18" viewBox="0 0 26 18"><path d="M0 17Q6 2 9 0h17q-5 17-9 17z" fill="#525252" /><path d="M16 6v6M13 9h6" stroke="#ddd" strokeWidth="1.200" /></svg>
      </div>
      <div className="mt-[2px] flex h-[25px] w-[604px] items-center border border-[#777] bg-[#454545] text-white">
        <div className="flex h-[23px] w-[59px] items-center justify-center border-r border-[#999] text-[12px] tracking-[0.3px]">MODELO</div>
        {statusIcons.map((s, i) => <StatusIcon key={i} {...s} />)}
        <div className="flex w-[35px] items-center justify-end gap-[4px] pr-px"><span className="text-[12px]">1:1</span><Down big /></div>
        <StatusIcon w="w-[7px]" d={null} sep />
        <StatusIcon w="w-[25px]" d={<><circle cx="10" cy="10" r="3.700" fill="none" stroke="#c8c8c8" strokeWidth="3" /><circle cx="10" cy="10" r="5.800" fill="none" stroke="#c8c8c8" strokeWidth="1.800" strokeDasharray="2.300 2.250" /></>} />
        <StatusIcon w="w-[14px]" d={<path d="M6 8h8l-4 5z" fill="#fff" />} sep />
        <StatusIcon w="w-[26px]" d={<path d="M10 3v14M3 10h14" stroke="#ccc" strokeWidth="1.800" />} sep />
        <StatusIcon w="w-[28px]" d={<><circle cx="10" cy="10" r="8.500" fill="#1467b8" /><circle cx="10" cy="10" r="5" fill="#1467b8" stroke="#0c3f7d" strokeWidth="1.500" /><path d="M7 10l2 2 4-4" stroke="#083a72" strokeWidth="1.500" fill="none" /></>} sep />
        <StatusIcon w="w-[24px]" d={<><path d="M4 3h6l2 2v8H4z" fill="#e9c64a" /><path d="M7 6h9v5H7z" fill="#dfe9f5" stroke="#357" /><path d="M9 12h6v4H9z" fill="#46a24a" /><path d="M5 8h4v4H5z" fill="#3468b5" /></>} />
        <StatusIcon w="w-[24px]" d={<><path d="M2 3h7v7H2zM4 17l3.500-5 3.500 5z" fill="none" stroke="#bbb" strokeWidth="1.300" /><circle cx="14" cy="9" r="3" fill="none" stroke="#bbb" strokeWidth="1.300" /></>} sep />
        <StatusIcon w="w-[29px]" d={<><path d="M2.500 4h15v12h-15z" fill="none" stroke="#ccc" strokeWidth="1.300" /><path d="M5 9v5h5zM10 6h5v5z" fill="#ddd" /></>} />
        <StatusIcon w="w-[22px]" d={<path d="M3 5h14M3 10h14M3 15h14" stroke="#ccc" strokeWidth="1.800" />} />
      </div>
    </div>
  );
}

function TaskButton({ children, active = false }: { children: ReactNode; active?: boolean }) {
  return (
    <div className={`flex h-[38px] w-[49px] items-center justify-center border-r-2 border-l ${active ? "border-t-2 border-t-[#333] border-r-white border-l-[#333] bg-[#f8f3f3]" : "border-t border-t-white border-r-[#555] border-l-white bg-[#d3cfc6]"}`}>
      <svg width="32" height="32" viewBox="0 0 32 32">{children}</svg>
    </div>
  );
}

function Taskbar() {
  return (
    <div className="flex h-[41px] items-start border-t-2 border-[#f6f5f2] bg-[#d3cfc6] pt-[1px] text-black">
      <div className="flex h-[38px] w-[56px] items-center gap-[2px] border-t border-r-2 border-white border-r-[#555] pl-[4px]">
        <svg width="16" height="16" viewBox="0 0 16 16"><path d="M2 3q3-2 6 0L7 8q-3-2-6 0z" fill="#e55a2b" /><path d="M9 3q3 2 6 0l-1 5q-3 2-6 0z" fill="#74b843" /><path d="M1 9q3-2 6 0l-1 5q-3-2-6 0z" fill="#3b8be0" /><path d="M8 9q3 2 6 0l-1 5q-3 2-6 0z" fill="#f3bd32" /></svg>
        <span className="pt-px text-[12px] font-bold tracking-[-0.45px]">Inicio</span>
      </div>
      <div className="ml-[9px] flex gap-[1px]">
        <TaskButton>
          <circle cx="16" cy="16" r="14" fill="#e8b92c" /><path d="M16 16L4 9A14 14 0 0 1 29 10H16z" fill="#dc4437" /><path d="M16 16L4 9a14 14 0 0 0 9 21z" fill="#3da352" /><circle cx="16" cy="16" r="6.800" fill="#fff" /><circle cx="16" cy="16" r="5.300" fill="#4587e8" />
        </TaskButton>
        <TaskButton>
          <path d="M2 14L17 5l13 12-15 11z" fill="#2c302c" stroke="#888" /><path d="M10 14l7-5 7 8-7 5z" fill="#5f8a4c" /><path d="M14 11l4 9" stroke="#213a19" strokeWidth="2" /><path d="M2 16l13 13 15-11" stroke="#eee" strokeWidth="1.500" fill="none" />
        </TaskButton>
        <TaskButton active>
          <path d="M0 0h32v32H0z" fill="#efc9cb" /><path d="M16 3l11 23-6-2-1-4h-8l-1 4-6 2z" fill="#c9151c" /><path d="M16 3v12l-8 9-3 2z" fill="#9b0c12" /><path d="M12 21l4-5 4 5z" fill="#efc9cb" />
        </TaskButton>
        <div className="-ml-[2px] flex">
          <TaskButton>
            <path d="M3 18Q4 5 19 7q12 2 8 10-3 5-6 3t-3 4q-1 5-7 4-8-2-8-10" fill="#c2dcee" stroke="#719dbd" /><circle cx="11" cy="12" r="2.500" fill="#67a83b" /><circle cx="18" cy="11" r="2.500" fill="#e9b53b" /><circle cx="8" cy="18" r="2.500" fill="#c93d3d" /><circle cx="12" cy="23" r="2.500" fill="#405fb8" /><path d="M28 3q3 2 0 6L18 29q-2 0 0-5z" fill="#d89a4a" stroke="#8b5b23" />
          </TaskButton>
        </div>
        <div className="w-px" />
        <TaskButton>
          <path d="M2 4h9l2 3h17v18H2z" fill="#ecd27c" stroke="#c5a54c" /><path d="M2 11h28v17H2z" fill="#f6e6a4" /><path d="M15 5h6v3h-6z" fill="#53a053" /><path d="M7 31v-7q0-4 4-4h12q4 0 4 4v7h-5v-6H12v6z" fill="#7fc1e8" stroke="#4888b4" />
        </TaskButton>
        <TaskButton>
          <path d="M2 2h26v28H2z" fill="#e6eefa" stroke="#2c5aa8" /><path d="M2 3l20-2v24L2 22z" fill="#2a60b5" /><text x="12" y="20" textAnchor="middle" fontSize="19" fontWeight="bold" fill="#fff" fontFamily="'Liberation Sans', sans-serif">W</text><path d="M14 25h12M16 28h10" stroke="#89a5d0" />
        </TaskButton>
      </div>
      <div className="ml-auto flex h-[38px] items-center">
        <span className="mr-[9px] pt-[3px] tracking-[-0.3px]">Vínculos</span>
        <span className="mr-[9px] text-[11.500px]">ES</span>
        <div className="flex h-[38px] items-center border-t border-l-2 border-[#777] pl-[5px]">
          <svg width="164" height="20" viewBox="0 0 164 20">
            <path d="M1 2h15v15H1z" fill="#b81515" /><path d="M4 14Q10 8 9 4t0 4 5 3-6 0" stroke="#fff" fill="none" strokeWidth="1.300" />
            <path d="M25 3h14v14H25z" fill="#5a8a35" stroke="#ddd" /><path d="M28 6l7 8M28 14l4-4" stroke="#fff" strokeWidth="2" />
            <path d="M49 10q6-7 15-6v12q-10 2-15-6z" fill="#75b52b" /><path d="M52 10q4-4 8 0-4 4-8 0" stroke="#e4f3cd" fill="none" />
            <circle cx="80" cy="10" r="8" fill="#f0a21c" /><circle cx="80" cy="10" r="4.500" fill="#fff3d8" /><circle cx="80" cy="10" r="2.500" fill="#e5890f" />
            <path d="M98 3v15M98 4q4-2 7 1t7 0v8q-4 2-7-1t-7 0" fill="#fff" stroke="#555" />
            <path d="M120 8h4l5-5v15l-5-5h-4z" fill="#fff" stroke="#555" /><path d="M131 6q3 4 0 9M134 4q4 6 0 12" fill="none" stroke="#777" />
            <path d="M149 6h12v9h-12zM151 18h9" fill="#eee" stroke="#444" /><path d="M145 3h5v6h-5zM147 9v9" fill="#fff" stroke="#444" />
          </svg>
          <div className="ml-[5px] flex w-[86px] flex-col items-center pt-[2px] text-[11px] leading-[16px] tracking-[-0.1px] whitespace-nowrap">
            <span>08:38 p.m. AMQ</span>
            <span>10/02/2015</span>
          </div>
          <svg width="16" height="16" viewBox="0 0 16 16" className="ml-[5px]"><path d="M1 3h15v10H1z" fill="#2b62b0" stroke="#1b3256" /><path d="M2 4h13L2 9z" fill="#79a7e0" /></svg>
          <div className="ml-px h-[38px] w-[2px] bg-white" />
        </div>
      </div>
    </div>
  );
}

export default function App() {
  return (
    <div className="relative flex h-[896px] w-[1440px] flex-col overflow-hidden bg-[#363636] font-['DejaVu_Sans_Condensed','DejaVu_Sans',sans-serif] text-[11px] leading-[15px] tracking-[-0.2px] [font-stretch:75%]">
      <div className="h-[3px] bg-[#a9c4e0]" />
      <div className="flex h-[852px]">
        <div className="w-[2px] bg-[#e3e8ee]" />
        <div className="w-px bg-[#151515]" />
        <div className="w-[3px] bg-[#555]" />
        <div className="flex w-[1428px] flex-col">
          <div className="h-px bg-[#3a3a3a]" />
          <TitleBar />
          <RibbonTabs />
          <Ribbon />
          <FileTabs />
          <div className="h-[4px] border-b border-[#1c2025] bg-[#5c6062]" />
          <Canvas />
          <div className="h-[3px] bg-[#5c5c5c]" />
          <CommandLine />
          <StatusBar />
          <div className="h-[5px] border-b border-[#1f1f1f] bg-[#595959]" />
        </div>
        <div className="w-[3px] bg-[#5c5a58]" />
        <div className="w-px bg-[#222]" />
        <div className="w-[2px] bg-[#eef1f4]" />
      </div>
      <Taskbar />
      <div className="absolute top-[6px] left-[6px] flex h-[41px] w-[41px] items-center border border-black bg-gradient-to-b from-[#aaa] to-[#686868]">
        <svg width="28" height="30" viewBox="0 0 28 30"><path d="M16 5l11 22-6-2-2-4h-8l-1 3-6 3z" fill="#d4242a" /><path d="M16 5v11L9 24l-5 3z" fill="#9b1419" /><path d="M12 20l4-5 3 5z" fill="#7a0d12" /></svg>
        <div className="ml-[3px]"><svg width="7" height="4" viewBox="0 0 7 4"><path d="M0 0h7L3.500 4z" fill="#333" /></svg></div>
      </div>
    </div>
  );
}
